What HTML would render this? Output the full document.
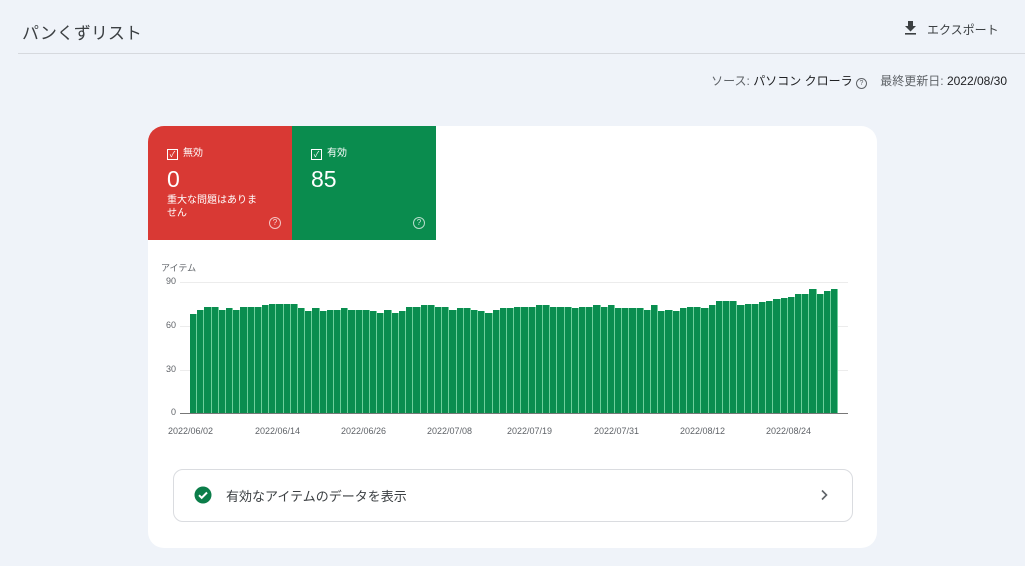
<!DOCTYPE html>
<html><head><meta charset="utf-8"><style>
body{margin:0;width:1025px;height:566px;background:#eff3f9;font-family:"Liberation Sans","Noto Sans CJK JP",sans-serif;position:relative;overflow:hidden;color:#202124}
.a{position:absolute}
.card{left:148px;top:126px;width:729px;height:422px;background:#fff;border-radius:16px;overflow:hidden}
.tile{top:0;width:144px;height:114px;color:#fff}
.cb{display:inline-block;width:9px;height:9px;border:1px solid #fff;vertical-align:-1px;margin-right:5px;font-size:8px;line-height:9px;text-align:center}
.q{width:10px;height:10px;border:1px solid rgba(255,255,255,.7);border-radius:50%;font-size:8px;line-height:10px;text-align:center;color:rgba(255,255,255,.8)}
.bars{left:190px;top:282px;width:648px;height:131px;display:flex;align-items:flex-end}
.bars div{flex:1;background:#0a8d4f;border-right:1.2px solid #6fcf9c}
.yl{font-size:9px;color:#5f6368;width:20px;text-align:right;left:156px}
.xl{font-size:9px;color:#5f6368;top:426px}
.gl{left:180px;width:668px;height:1px;background:#ececec}
</style></head><body>
<div class="a" style="left:22px;top:19px;font-size:17px;color:#3c4043">パンくずリスト</div>
<svg class="a" style="left:904px;top:21px" width="13" height="14" viewBox="0 0 13 14"><path d="M4 0h5v5h3l-5.5 5.5L1 5h3z" fill="#3c4043"/><rect x="1" y="12" width="11" height="1.6" fill="#3c4043"/></svg>
<div class="a" style="left:927px;top:21px;font-size:12px;color:#3c4043">エクスポート</div>
<div class="a" style="left:18px;top:53px;width:1007px;height:1px;background:#d6d9de"></div>
<div class="a" style="right:18px;top:72px;font-size:12px;color:#5f6368;white-space:nowrap">ソース: <span style="color:#202124">パソコン クローラ</span> <span style="display:inline-block;width:9px;height:9px;border:1px solid #5f6368;border-radius:50%;font-size:7px;line-height:9px;text-align:center;vertical-align:0">?</span>&nbsp;&nbsp;&nbsp;&nbsp;最終更新日: <span style="color:#202124">2022/08/30</span></div>
<div class="a card">
 <div class="a tile" style="left:0;background:#d93934">
  <div class="a" style="left:19px;top:18px;font-size:10px"><span class="cb">✓</span>無効</div>
  <div class="a" style="left:19px;top:40px;font-size:23px">0</div>
  <div class="a" style="left:19px;top:68px;font-size:10px;line-height:13px;width:120px">重大な問題はありま<br>せん</div>
  <div class="a q" style="left:121px;top:91px">?</div>
 </div>
 <div class="a tile" style="left:144px;background:#0a8c4e">
  <div class="a" style="left:19px;top:18px;font-size:10px"><span class="cb">✓</span>有効</div>
  <div class="a" style="left:19px;top:40px;font-size:23px">85</div>
  <div class="a q" style="left:121px;top:91px">?</div>
 </div>
</div>
<div class="a" style="left:161px;top:261px;font-size:9px;color:#5f6368">アイテム</div>
<div class="a gl" style="top:282px"></div><div class="a gl" style="top:326px"></div><div class="a gl" style="top:370px"></div>
<div class="a" style="left:180px;top:413px;width:668px;height:1px;background:#777"></div>
<div class="a yl" style="top:276px">90</div><div class="a yl" style="top:320px">60</div><div class="a yl" style="top:364px">30</div><div class="a yl" style="top:407px">0</div>
<div class="a bars">
<div style="height:99px"></div><div style="height:103px"></div><div style="height:106px"></div><div style="height:106px"></div><div style="height:103px"></div><div style="height:105px"></div><div style="height:103px"></div><div style="height:106px"></div><div style="height:106px"></div><div style="height:106px"></div>
<div style="height:108px"></div><div style="height:109px"></div><div style="height:109px"></div><div style="height:109px"></div><div style="height:109px"></div><div style="height:105px"></div><div style="height:102px"></div><div style="height:105px"></div><div style="height:102px"></div><div style="height:103px"></div>
<div style="height:103px"></div><div style="height:105px"></div><div style="height:103px"></div><div style="height:103px"></div><div style="height:103px"></div><div style="height:102px"></div><div style="height:100px"></div><div style="height:103px"></div><div style="height:100px"></div><div style="height:102px"></div>
<div style="height:106px"></div><div style="height:106px"></div><div style="height:108px"></div><div style="height:108px"></div><div style="height:106px"></div><div style="height:106px"></div><div style="height:103px"></div><div style="height:105px"></div><div style="height:105px"></div><div style="height:103px"></div>
<div style="height:102px"></div><div style="height:100px"></div><div style="height:103px"></div><div style="height:105px"></div><div style="height:105px"></div><div style="height:106px"></div><div style="height:106px"></div><div style="height:106px"></div><div style="height:108px"></div><div style="height:108px"></div>
<div style="height:106px"></div><div style="height:106px"></div><div style="height:106px"></div><div style="height:105px"></div><div style="height:106px"></div><div style="height:106px"></div><div style="height:108px"></div><div style="height:106px"></div><div style="height:108px"></div><div style="height:105px"></div>
<div style="height:105px"></div><div style="height:105px"></div><div style="height:105px"></div><div style="height:103px"></div><div style="height:108px"></div><div style="height:102px"></div><div style="height:103px"></div><div style="height:102px"></div><div style="height:105px"></div><div style="height:106px"></div>
<div style="height:106px"></div><div style="height:105px"></div><div style="height:108px"></div><div style="height:112px"></div><div style="height:112px"></div><div style="height:112px"></div><div style="height:108px"></div><div style="height:109px"></div><div style="height:109px"></div><div style="height:111px"></div>
<div style="height:112px"></div><div style="height:114px"></div><div style="height:115px"></div><div style="height:116px"></div><div style="height:119px"></div><div style="height:119px"></div><div style="height:124px"></div><div style="height:119px"></div><div style="height:122px"></div><div style="height:124px"></div>
</div>
<div class="a xl" style="left:168px">2022/06/02</div><div class="a xl" style="left:255px">2022/06/14</div><div class="a xl" style="left:341px">2022/06/26</div><div class="a xl" style="left:427px">2022/07/08</div><div class="a xl" style="left:507px">2022/07/19</div><div class="a xl" style="left:594px">2022/07/31</div><div class="a xl" style="left:680px">2022/08/12</div><div class="a xl" style="left:766px">2022/08/24</div>
<div class="a" style="left:173px;top:469px;width:678px;height:51px;border:1px solid #dadce0;border-radius:10px;background:#fff"></div>
<svg class="a" style="left:194px;top:486px" width="18" height="18" viewBox="0 0 18 18"><circle cx="9" cy="9" r="8.5" fill="#0b7d49"/><path d="M5 9.2l2.7 2.6L13 6.5" stroke="#fff" stroke-width="2" fill="none"/></svg>
<div class="a" style="left:226px;top:486px;font-size:13px;color:#3c4043">有効なアイテムのデータを表示</div>
<svg class="a" style="left:819px;top:489px" width="10" height="12" viewBox="0 0 10 12"><path d="M3 1.5l4.5 4.5L3 10.5" stroke="#5f6368" stroke-width="1.6" fill="none"/></svg>
</body></html>
